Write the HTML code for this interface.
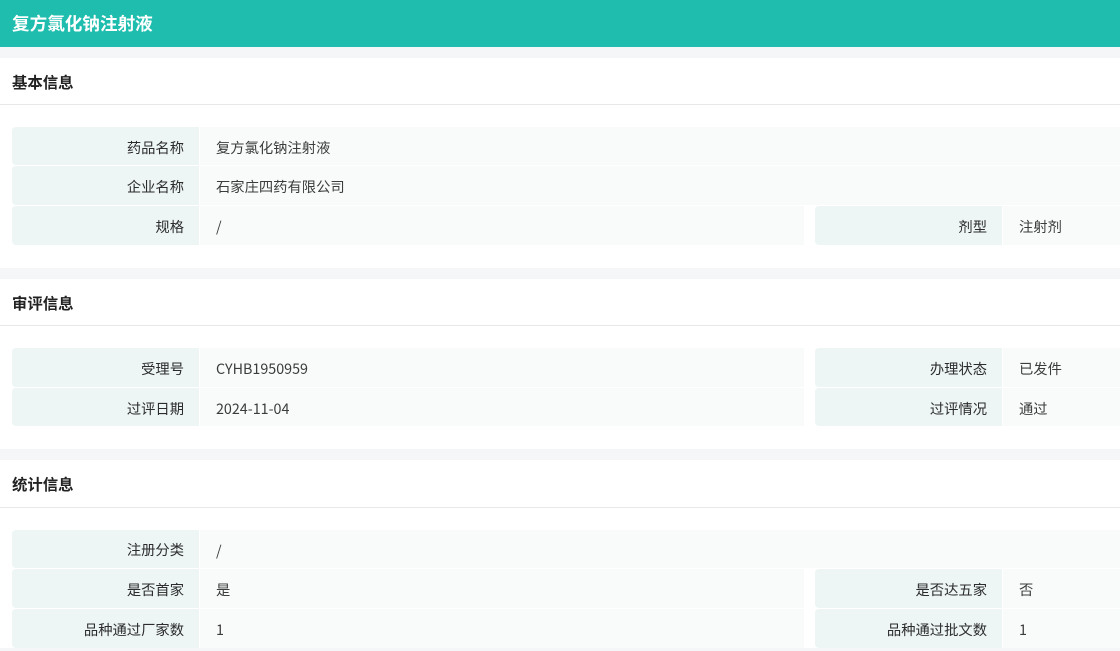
<!DOCTYPE html>
<html lang="zh-CN">
<head>
<meta charset="utf-8">
<title>复方氯化钠注射液</title>
<style>
html,body{margin:0;padding:0;background:#f5f6f8;}
body{width:1120px;height:648px;position:relative;font-family:"Noto Sans CJK SC",sans-serif;font-size:14.3px;}
.top{position:absolute;left:0;top:0;width:1120px;height:47px;background:#1fbdae;color:#fff;font-size:17.6px;font-weight:700;line-height:47px;padding-left:12px;box-sizing:border-box;}
.sec{position:absolute;left:0;width:1120px;background:#fff;}
.h{position:absolute;left:0;width:1120px;height:46px;border-bottom:1px solid #e8e8e8;font-weight:700;font-size:15.4px;line-height:49px;color:#222;}
.h span{margin-left:12px;}
.l,.v{position:absolute;box-sizing:border-box;white-space:nowrap;}
.l{background:#edf5f5;color:#2c2c2c;text-align:right;padding-right:15px;border-radius:4px 0 0 4px;width:187px;}
.v{background:#f9fbfb;color:#3c3c3c;padding-left:16px;}
</style>
</head>
<body>
<div class="top">复方氯化钠注射液</div>

<div class="sec" style="top:58px;height:210px;">
  <div class="h" style="top:0"><span>基本信息</span></div>
</div>
<div class="l" style="left:12px;top:127px;height:38px;line-height:41px;">药品名称</div>
<div class="v" style="left:200px;top:127px;width:920px;height:38px;line-height:41px;">复方氯化钠注射液</div>
<div class="l" style="left:12px;top:166px;height:39px;line-height:41px;">企业名称</div>
<div class="v" style="left:200px;top:166px;width:920px;height:39px;line-height:41px;">石家庄四药有限公司</div>
<div class="l" style="left:12px;top:206px;height:39px;line-height:42px;">规格</div>
<div class="v" style="left:200px;top:206px;width:604px;height:39px;line-height:42px;">/</div>
<div class="l" style="left:815px;top:206px;height:39px;line-height:42px;">剂型</div>
<div class="v" style="left:1003px;top:206px;width:117px;height:39px;line-height:42px;">注射剂</div>

<div class="sec" style="top:279px;height:170px;">
  <div class="h" style="top:0"><span>审评信息</span></div>
</div>
<div class="l" style="left:12px;top:348px;height:39px;line-height:42px;">受理号</div>
<div class="v" style="left:200px;top:348px;width:604px;height:39px;line-height:42px;">CYHB1950959</div>
<div class="l" style="left:815px;top:348px;height:39px;line-height:42px;">办理状态</div>
<div class="v" style="left:1003px;top:348px;width:117px;height:39px;line-height:42px;">已发件</div>
<div class="l" style="left:12px;top:388px;height:38px;line-height:42px;">过评日期</div>
<div class="v" style="left:200px;top:388px;width:604px;height:38px;line-height:42px;">2024-11-04</div>
<div class="l" style="left:815px;top:388px;height:38px;line-height:42px;">过评情况</div>
<div class="v" style="left:1003px;top:388px;width:117px;height:38px;line-height:42px;">通过</div>

<div class="sec" style="top:460px;height:188px;">
  <div class="h" style="top:0;height:47px;"><span>统计信息</span></div>
</div>
<div class="l" style="left:12px;top:530px;height:38px;line-height:40px;">注册分类</div>
<div class="v" style="left:200px;top:530px;width:920px;height:38px;line-height:42px;">/</div>
<div class="l" style="left:12px;top:569px;height:39px;line-height:42px;">是否首家</div>
<div class="v" style="left:200px;top:569px;width:604px;height:39px;line-height:42px;">是</div>
<div class="l" style="left:815px;top:569px;height:39px;line-height:42px;">是否达五家</div>
<div class="v" style="left:1003px;top:569px;width:117px;height:39px;line-height:42px;">否</div>
<div class="l" style="left:12px;top:609px;height:39px;line-height:42px;">品种通过厂家数</div>
<div class="v" style="left:200px;top:609px;width:604px;height:39px;line-height:42px;">1</div>
<div class="l" style="left:815px;top:609px;height:39px;line-height:42px;">品种通过批文数</div>
<div class="v" style="left:1003px;top:609px;width:117px;height:39px;line-height:42px;">1</div>
</body>
</html>
